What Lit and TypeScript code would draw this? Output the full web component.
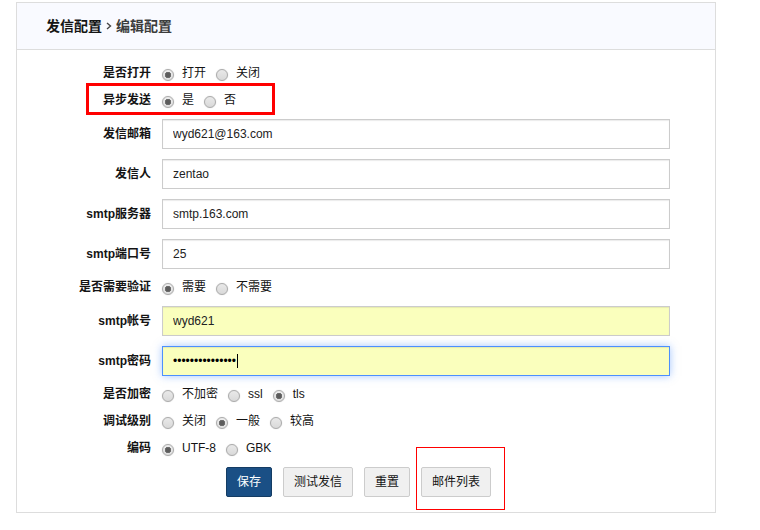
import { LitElement, html, css, nothing } from "lit";
import { customElement } from "lit/decorators.js";
import { classMap } from "lit/directives/class-map.js";

interface RadioRow {
  kind: "radio";
  name: string;
  label: string;
  options: string[];
  checked: number;
  marked?: boolean;
}

interface InputRow {
  kind: "input";
  name: string;
  label: string;
  value: string;
  type?: "text" | "password";
  filled?: boolean;
  active?: boolean;
}

const rows: (RadioRow | InputRow)[] = [
  { kind: "radio", name: "turnon", label: "是否打开", options: ["打开", "关闭"], checked: 0 },
  { kind: "radio", name: "async", label: "异步发送", options: ["是", "否"], checked: 0, marked: true },
  { kind: "input", name: "fromAddress", label: "发信邮箱", value: "wyd621@163.com" },
  { kind: "input", name: "fromName", label: "发信人", value: "zentao" },
  { kind: "input", name: "host", label: "smtp服务器", value: "smtp.163.com" },
  { kind: "input", name: "port", label: "smtp端口号", value: "25" },
  { kind: "radio", name: "auth", label: "是否需要验证", options: ["需要", "不需要"], checked: 0 },
  { kind: "input", name: "username", label: "smtp帐号", value: "wyd621", filled: true },
  {
    kind: "input",
    name: "password",
    label: "smtp密码",
    value: "0123456789abcde",
    type: "password",
    filled: true,
    active: true,
  },
  { kind: "radio", name: "secure", label: "是否加密", options: ["不加密", "ssl", "tls"], checked: 2 },
  { kind: "radio", name: "debug", label: "调试级别", options: ["关闭", "一般", "较高"], checked: 1 },
  { kind: "radio", name: "charset", label: "编码", options: ["UTF-8", "GBK"], checked: 0 },
];

@customElement("app-root")
export class AppRoot extends LitElement {
  static styles = css`
    :host {
      display: block;
      padding: 2px 44px 16px 16px;
      background: #fff;
      color: #141414;
      font: 12px/17px "Liberation Sans", "Noto Sans CJK SC", sans-serif;
    }
    .panel {
      border: 1px solid #ddd;
    }
    .heading {
      display: flex;
      align-items: center;
      gap: 4px;
      height: 46px;
      padding: 0 29px;
      border-bottom: 1px solid #ddd;
      background: #f9faff;
      font-size: 14px;
      font-weight: bold;
    }
    .heading h1 {
      margin: 0;
      font-size: 14px;
    }
    .chevron {
      width: 6px;
      height: 8px;
      fill: none;
      stroke: #444;
    }
    .current {
      color: #3c3c3c;
    }
    form {
      display: grid;
      gap: 10px;
      padding: 15px 45px 15px 0;
    }
    .row {
      position: relative;
      display: grid;
      grid-template-columns: 134px 1fr;
      column-gap: 11px;
      align-items: center;
    }
    .name {
      text-align: right;
      font-weight: bold;
      white-space: nowrap;
    }
    .options {
      display: flex;
      gap: 10px;
    }
    .option {
      display: flex;
      align-items: center;
      gap: 8px;
      height: 17px;
    }
    .radio {
      appearance: none;
      box-sizing: border-box;
      width: 12px;
      height: 12px;
      margin: 3px 0 0;
      border: 1px solid #aaa;
      border-radius: 50%;
      background: linear-gradient(#e9e9e9, #d9d9d9);
      box-shadow: 0 0 1px rgba(0, 0, 0, 0.25);
    }
    .radio:checked {
      background:
        radial-gradient(circle, #5c5c5c 2px, rgba(92, 92, 92, 0.8) 3px, transparent 3px),
        linear-gradient(#eee, #dedede);
    }
    .field {
      position: relative;
    }
    .input {
      display: block;
      box-sizing: border-box;
      width: 100%;
      height: 30px;
      padding: 0 10px;
      border: 1px solid #ccc;
      border-radius: 0;
      outline: none;
      background: #fff;
      box-shadow: inset 0 1px 1px rgba(0, 0, 0, 0.08);
      color: #222;
      font: inherit;
    }
    .filled {
      background: #faffbd;
    }
    .active {
      border-color: #4d90fe;
      caret-color: transparent;
      color: #000;
      box-shadow:
        inset 0 1px 1px rgba(0, 0, 0, 0.08),
        0 0 8px rgba(77, 144, 254, 0.5);
    }
    .caret {
      position: absolute;
      top: 8px;
      left: 75px;
      width: 1px;
      height: 14px;
      background: #000;
    }
    .mark {
      position: absolute;
      box-sizing: border-box;
      pointer-events: none;
    }
    .mark-row {
      top: -9px;
      left: 69px;
      width: 189px;
      height: 32px;
      border: 3px solid #f00;
    }
    .mark-button {
      top: -20px;
      left: -5px;
      width: 89px;
      height: 63px;
      border: 1px solid #f00;
    }
    .actions {
      display: flex;
      gap: 11px;
      padding-left: 209px;
    }
    .action {
      position: relative;
    }
    .btn {
      display: block;
      height: 30px;
      padding: 1px 10px 0;
      border: 1px solid #ccc;
      border-radius: 2px;
      background: #f0f0f0;
      color: #141414;
      font: inherit;
      white-space: nowrap;
    }
    .primary {
      border-color: #143c63;
      background: #1a4f85;
      color: #fff;
    }
  `;

  private renderRadio(row: RadioRow) {
    return html`
      <div class="row" role="radiogroup" aria-labelledby=${row.name}>
        <span class="name" id=${row.name}>${row.label}</span>
        <div class="options">
          ${row.options.map(
            (text, i) => html`<label class="option"
              ><input class="radio" type="radio" name=${row.name} .checked=${i === row.checked} /><span
                >${text}</span
              ></label
            >`,
          )}
        </div>
        ${row.marked ? html`<span class="mark mark-row"></span>` : nothing}
      </div>
    `;
  }

  private renderInput(row: InputRow) {
    return html`
      <div class="row">
        <label class="name" for=${row.name}>${row.label}</label>
        <div class="field">
          <input
            id=${row.name}
            class=${classMap({ input: true, filled: !!row.filled, active: !!row.active })}
            type=${row.type ?? "text"}
            .value=${row.value}
          />
          ${row.active ? html`<span class="caret"></span>` : nothing}
        </div>
      </div>
    `;
  }

  render() {
    return html`
      <main class="panel">
        <header class="heading">
          <h1>发信配置</h1>
          <svg class="chevron" viewBox="0 0 6 8" aria-hidden="true">
            <path d="M1 1L4.5 4L1 7" stroke-width="1.4" />
          </svg>
          <span class="current">编辑配置</span>
        </header>
        <form @submit=${(e: Event) => e.preventDefault()}>
          ${rows.map((row) => (row.kind === "radio" ? this.renderRadio(row) : this.renderInput(row)))}
          <div class="actions">
            <button class="btn primary" type="submit">保存</button>
            <button class="btn" type="button">测试发信</button>
            <button class="btn" type="reset">重置</button>
            <div class="action">
              <button class="btn" type="button">邮件列表</button>
              <span class="mark mark-button"></span>
            </div>
          </div>
        </form>
      </main>
    `;
  }
}
